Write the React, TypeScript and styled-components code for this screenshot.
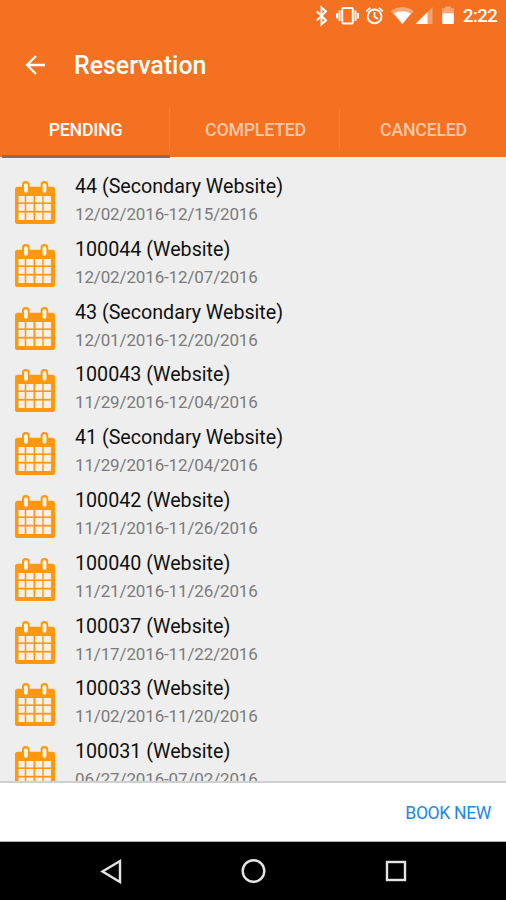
import React from "react";
import styled, { createGlobalStyle } from "styled-components";

const GlobalStyle = createGlobalStyle`
  * { box-sizing: border-box; }
  body { margin: 0; background: #000; }
`;

const Screen = styled.div`
  width: 506px;
  height: 900px;
  display: flex;
  flex-direction: column;
  overflow: hidden;
  background: #eeeeee;
  font-family: Roboto, "Liberation Sans", sans-serif;
`;

const Header = styled.header`
  height: 157px;
  flex: none;
  display: flex;
  flex-direction: column;
  background: #f37121;
  color: #fff;
`;

const StatusBar = styled.div`
  height: 32px;
  display: flex;
  justify-content: flex-end;
  padding-right: 8px;
`;

const StatusIcons = styled.svg`
  width: 151px;
  height: 32px;
  flex: none;
`;

const Clock = styled.span`
  width: 35px;
  font-size: 18.6px;
  font-weight: 500;
  line-height: 32px;
  letter-spacing: -0.6px;
  white-space: nowrap;
`;

const TitleBar = styled.div`
  height: 69px;
  display: flex;
  align-items: center;
  padding-left: 24px;
  gap: 27px;
`;

const BackIcon = styled.svg`
  width: 23px;
  height: 22px;
  margin-top: -3px;
`;

const Title = styled.h1`
  margin: -2px 0 0;
  font-size: 24.9px;
  font-weight: 500;
  line-height: 30px;
`;

const Tabs = styled.nav`
  height: 56px;
  display: grid;
  grid-template-columns: 170px 170px 166px;
`;

const Tab = styled.button<{ $active?: boolean; $divided?: boolean }>`
  position: relative;
  border: 0;
  padding: 1px 0 0 1px;
  background: none;
  font: 500 17.8px/22px Roboto, "Liberation Sans", sans-serif;
  letter-spacing: -0.25px;
  color: ${(p) => (p.$active ? "#fff" : "rgba(255,255,255,0.62)")};

  &::before {
    content: "";
    position: absolute;
    left: 2px;
    right: 0;
    bottom: -1px;
    height: 3px;
    background: ${(p) => (p.$active ? "#8c6a5c" : "transparent")};
  }

  &::after {
    content: "";
    position: absolute;
    top: 7px;
    right: 0;
    width: 1px;
    height: 41px;
    background: ${(p) => (p.$divided ? "rgba(255,255,255,0.14)" : "transparent")};
  }
`;

const List = styled.ul`
  flex: 1;
  min-height: 0;
  overflow: hidden;
  margin: 0;
  padding: 15px 0 0 15px;
  list-style: none;
`;

const Row = styled.li`
  height: 62.8px;
  display: flex;
  gap: 20px;
`;

const CalendarIcon = styled.svg`
  width: 40px;
  height: 43px;
  margin-top: 9px;
  flex: none;
`;

const Name = styled.div`
  padding-top: 1px;
  font-size: 19.7px;
  line-height: 28px;
  color: #111;
  letter-spacing: -0.02px;
  white-space: nowrap;
`;

const Dates = styled.div`
  font-size: 17px;
  line-height: 27px;
  color: #7b7b7b;
  letter-spacing: -0.14px;
  white-space: nowrap;
`;

const Footer = styled.footer`
  height: 61px;
  flex: none;
  display: flex;
  align-items: center;
  justify-content: flex-end;
  padding: 1px 15px 0 0;
  background: #fff;
  border-top: 2px solid #d0d0d0;
  border-bottom: 1px solid #b4b4b4;
`;

const BookButton = styled.button`
  border: 0;
  padding: 0;
  background: none;
  color: #2188e8;
  font: 400 17.6px/24px Roboto, "Liberation Sans", sans-serif;
  letter-spacing: -0.38px;
`;

const NavBar = styled.div`
  height: 58px;
  flex: none;
  background: #000;
  display: flex;
  align-items: center;
  justify-content: space-between;
  padding: 0 97px 0 99px;
`;

const NavIcon = styled.svg`
  width: 26px;
  height: 26px;
  fill: none;
  stroke: #e4e4e4;
  stroke-width: 2.4;
`;

const reservations = [
  ["44 (Secondary Website)", "12/02/2016-12/15/2016"],
  ["100044 (Website)", "12/02/2016-12/07/2016"],
  ["43 (Secondary Website)", "12/01/2016-12/20/2016"],
  ["100043 (Website)", "11/29/2016-12/04/2016"],
  ["41 (Secondary Website)", "11/29/2016-12/04/2016"],
  ["100042 (Website)", "11/21/2016-11/26/2016"],
  ["100040 (Website)", "11/21/2016-11/26/2016"],
  ["100037 (Website)", "11/17/2016-11/22/2016"],
  ["100033 (Website)", "11/02/2016-11/20/2016"],
  ["100031 (Website)", "06/27/2016-07/02/2016"],
];

const columns = [[3.8, 6.2], [11.6, 7.2], [20.6, 7], [29, 7.2]];
const lines = [[15, 6.4], [23, 6.8], [31.6, 7.4]];

function Calendar() {
  return (
    <CalendarIcon viewBox="0 0 40 43">
      <rect x="0" y="5.8" width="40" height="37.2" rx="2.6" fill="#ff980d" />
      {[7, 25.6].map((x) => (
        <g key={x}>
          <rect x={x} y="0" width="7.6" height="13" rx="3.6" fill="#ff980d" />
          <rect x={x + 2} y="2.2" width="3.8" height="9.6" rx="1.8" fill="#fff6e8" />
        </g>
      ))}
      {lines.map(([y, h]) =>
        columns.map(([x, w]) => (
          <rect key={`${x}-${y}`} x={x - 0.3} y={y} width={w} height={h} fill="#f7f0ea" />
        ))
      )}
    </CalendarIcon>
  );
}

function StatusGlyphs() {
  return (
    <StatusIcons viewBox="312 0 151 32">
      <path d="M316.8 11.2 326 20.4 321.5 24.3V7.5L326 11.4 316.8 20.6" fill="none" stroke="#fff" strokeWidth="2" />
      <rect x="342.2" y="8" width="10.6" height="15.5" rx="1" fill="none" stroke="#fff" strokeWidth="2" />
      <path d="M339.5 10.5v10.5M337 13v5.5M355.5 10.5v10.5M358 13v5.5" stroke="#fff" strokeWidth="2" />
      <circle cx="374.6" cy="16.4" r="6.9" fill="none" stroke="#fff" strokeWidth="1.9" />
      <path d="M374.5 12v4.8l3.6 2.3M366.2 11.3l4.2-3.7M383 11.3l-4.2-3.7" fill="none" stroke="#fff" strokeWidth="1.7" />
      <path d="M390.8 11.2Q402.2 2.8 413.8 11.2L402.3 24Z" fill="#fff" opacity=".38" />
      <path d="M393.8 13.2Q402.2 9.2 410.8 13.2L402.3 24Z" fill="#fff" />
      <path d="M432.5 7v17H415.5Z" fill="#fff" opacity=".34" />
      <path d="M427.5 12v12H415.5Z" fill="#fff" />
      <path d="M442.2 8.2h3V6.5h5.6v1.7h3V14h-11.6Z" fill="#fff" opacity=".38" />
      <path d="M442.2 13.2h11.6V23q0 1-1 1h-9.6q-1 0-1-1Z" fill="#fff" />
    </StatusIcons>
  );
}

export default function App() {
  return (
    <>
      <GlobalStyle />
      <Screen>
        <Header>
          <StatusBar>
            <StatusGlyphs />
            <Clock>2:22</Clock>
          </StatusBar>
          <TitleBar>
            <BackIcon viewBox="0 0 23 22" fill="none" stroke="#fff" strokeWidth="2.3">
              <path d="M21 11H3.2M12 2 3 11l9 9" />
            </BackIcon>
            <Title>Reservation</Title>
          </TitleBar>
          <Tabs>
            <Tab $active $divided>PENDING</Tab>
            <Tab $divided>COMPLETED</Tab>
            <Tab>CANCELED</Tab>
          </Tabs>
        </Header>
        <List>
          {reservations.map(([name, dates]) => (
            <Row key={name}>
              <Calendar />
              <div>
                <Name>{name}</Name>
                <Dates>{dates}</Dates>
              </div>
            </Row>
          ))}
        </List>
        <Footer>
          <BookButton>BOOK NEW</BookButton>
        </Footer>
        <NavBar>
          <NavIcon viewBox="0 0 26 26"><path d="M21 3v21L3.5 13.5Z" /></NavIcon>
          <NavIcon viewBox="0 0 26 26"><circle cx="12.5" cy="13" r="10.8" /></NavIcon>
          <NavIcon viewBox="0 0 26 26"><rect x="4" y="4" width="18" height="18" /></NavIcon>
        </NavBar>
      </Screen>
    </>
  );
}
